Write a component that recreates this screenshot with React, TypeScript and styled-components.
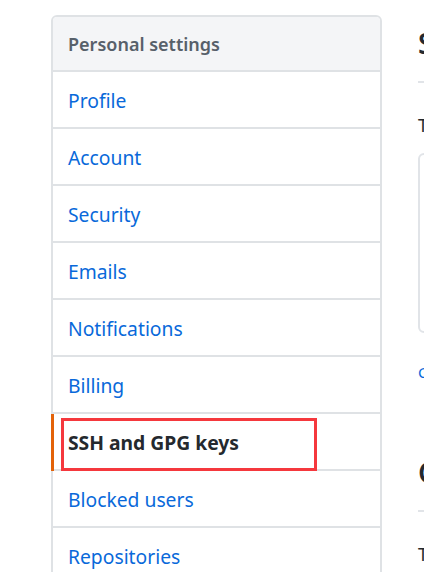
import React from "react";
import styled, { createGlobalStyle } from "styled-components";

const Global = createGlobalStyle`
  html, body { margin: 0; padding: 0; background: #ffffff; }
  body { font-family: "Noto Sans", "Segoe UI", sans-serif; overflow: hidden; }
`;

const Page = styled.div`
  display: flex;
  align-items: flex-start;
  gap: 36px;
  padding: 15px 0 0 51px;
  width: 424px;
  height: 572px;
  box-sizing: border-box;
  overflow: hidden;
`;

const Sidebar = styled.nav`
  flex: 0 0 331px;
  border: 2px solid #dfe2e5;
  border-radius: 6px;
  box-sizing: border-box;
  background: #ffffff;
`;

const Header = styled.div`
  height: 55px;
  display: flex;
  align-items: center;
  padding: 1px 0 0 15px;
  box-sizing: border-box;
  background: #f4f5f7;
  color: #57606a;
  font-size: 18px;
  font-weight: 600;
  border-bottom: 2px solid #dfe2e5;
  border-radius: 4px 4px 0 0;
`;

const Item = styled.a<{ $selected?: boolean }>`
  position: relative;
  display: flex;
  align-items: center;
  padding: 1px 0 0 15px;
  box-sizing: border-box;
  height: 57px;
  font-size: 19.3px;
  text-decoration: none;
  color: ${(p) => (p.$selected ? "#24292e" : "#0969da")};
  font-weight: ${(p) => (p.$selected ? 700 : 400)};
  border-bottom: 2px solid #dfe2e5;

  ${(p) =>
    p.$selected &&
    `
    &::before {
      content: "";
      position: absolute;
      left: -2px;
      top: 0;
      bottom: -2px;
      width: 3px;
      background: #e36209;
    }
  `}
`;

const Highlight = styled.span`
  position: absolute;
  left: 8px;
  top: 4px;
  width: 256px;
  height: 53px;
  border: 3px solid #f5383d;
  box-sizing: border-box;
  pointer-events: none;
`;

const Main = styled.main`
  flex: 0 0 auto;
  width: 600px;
  padding-top: 11px;
  color: #24292e;
`;

const SectionHeading = styled.h2<{ $spaced?: boolean }>`
  margin: ${(p) => (p.$spaced ? "72px" : "0")} 0 0;
  padding-bottom: 20px;
  font-size: 28px;
  line-height: 35px;
  font-weight: 600;
  border-bottom: 2px solid #e1e4e8;
`;

const Lead = styled.p`
  margin: 29px 0 0;
  font-size: 18px;
  line-height: 27px;
`;

const KeyBox = styled.div`
  margin-top: 14px;
  height: 180px;
  border: 2px solid #e1e4e8;
  border-radius: 6px;
  box-sizing: border-box;
`;

const Note = styled.p`
  margin: 28px 0 0;
  font-size: 15px;
  line-height: 22px;
  color: #0969da;
`;

const items = [
  "Profile",
  "Account",
  "Security",
  "Emails",
  "Notifications",
  "Billing",
  "SSH and GPG keys",
  "Blocked users",
  "Repositories",
];

export default function App() {
  return (
    <>
      <Global />
      <Page>
        <Sidebar>
          <Header>Personal settings</Header>
          {items.map((label) => {
            const selected = label === "SSH and GPG keys";
            return (
              <Item key={label} href="#" $selected={selected}>
                {label}
                {selected && <Highlight />}
              </Item>
            );
          })}
        </Sidebar>
        <Main>
          <SectionHeading>SSH keys</SectionHeading>
          <Lead>This is a list of SSH keys associated with your account.</Lead>
          <KeyBox />
          <Note>Check out our guide to generating SSH keys.</Note>
          <SectionHeading $spaced>GPG keys</SectionHeading>
          <Lead>There are no GPG keys associated with your account.</Lead>
        </Main>
      </Page>
    </>
  );
}
